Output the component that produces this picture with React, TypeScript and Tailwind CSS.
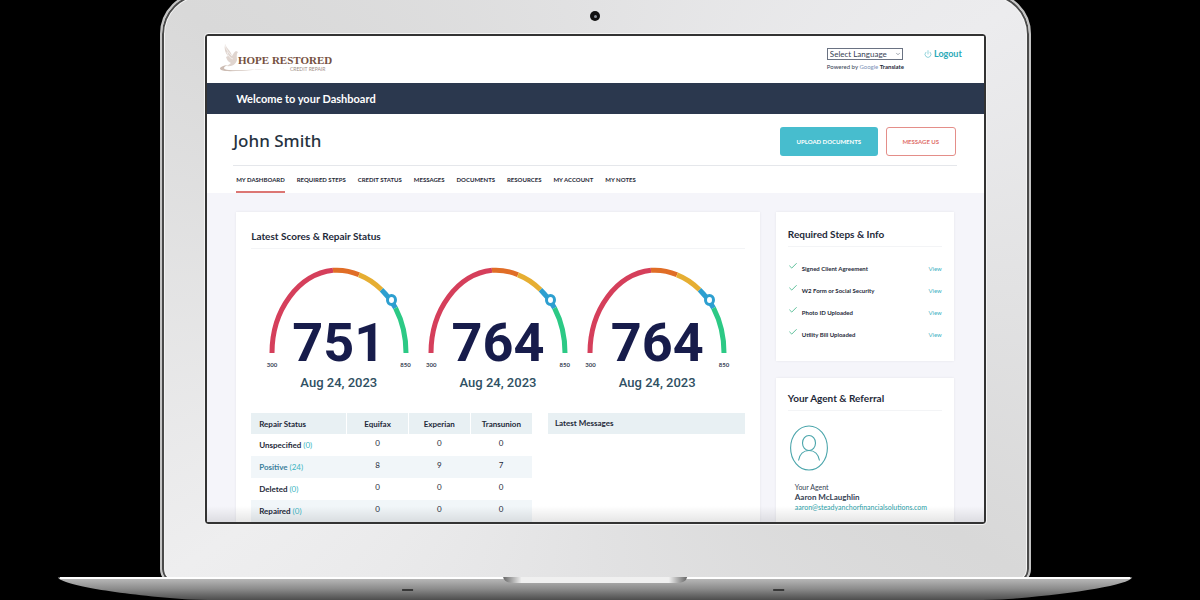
import React from 'react';
import { Check, ChevronDown, Power } from 'lucide-react';

const tabs = [
  'MY DASHBOARD',
  'REQUIRED STEPS',
  'CREDIT STATUS',
  'MESSAGES',
  'DOCUMENTS',
  'RESOURCES',
  'MY ACCOUNT',
  'MY NOTES',
];

const scores = [
  { bureau: 'Equifax', score: 751 },
  { bureau: 'Experian', score: 764 },
  { bureau: 'Transunion', score: 764 },
];

const repairRows = [
  { label: 'Unspecified', total: 0, values: [0, 0, 0] },
  { label: 'Positive', total: 24, values: [8, 9, 7] },
  { label: 'Deleted', total: 0, values: [0, 0, 0] },
  { label: 'Repaired', total: 0, values: [0, 0, 0] },
];

const steps = ['Signed Client Agreement', 'W2 Form or Social Security', 'Photo ID Uploaded', 'Utility Bill Uploaded'];

function Logo() {
  return (
    <a href="#" aria-label="Hope Restored Credit Repair">
      <svg width="124" height="32" viewBox="0 0 124 32">
        <path
          d="M6 1c-1 5 0 9 3 12l-2 1c1 3 2 5 5 6l-4 3c5 1 9-2 10-6 0-3-1-5 1-8l-2-1c-3 2-3 4-4 5C12 8 8 6 6 1z"
          fill="#e0d5cf"
        />
        <path d="M6 2c1 5 4 8 7 11M8 9c1 4 3 6 6 7" stroke="#fff" strokeWidth="0.6" fill="none" />
        <path d="M9 22c-9 1-11 5-3 6 14 1 38-3 62-2-22-1-40 2-58 1-7-1-6-3-1-5z" fill="#cdbdb4" />
        <text x="19" y="21" fontSize="11" fontWeight="700" fill="#75503f" fontFamily="Liberation Serif, serif">
          HOPE RESTORED
        </text>
        <text x="71" y="28" fontSize="5" fill="#a08d84" fontFamily="Lato, sans-serif">
          CREDIT REPAIR
        </text>
      </svg>
    </a>
  );
}

function Gauge({ score }: { score: number }) {
  return (
    <div className="flex flex-col items-center">
      <div className="relative">
        <svg width="148" height="98" viewBox="0 0 148 98" fill="none" strokeWidth="5">
          <path d="M7 92A67 83 0 0 1 68 9.300" stroke="#d53f5b" />
          <path d="M68 9.300A67 83 0 0 1 94 13.800" stroke="#e06d26" />
          <path d="M94 13.800A67 83 0 0 1 116.500 28.800" stroke="#e6ae32" />
          <path d="M116.500 28.800A67 83 0 0 1 130.500 47" stroke="#2d9fd0" />
          <path d="M130.500 47A67 83 0 0 1 141 92" stroke="#2cc985" />
          <ellipse cx="126.500" cy="39" rx="4" ry="4.500" fill="#fff" stroke="#2d9fd0" strokeWidth="3" />
        </svg>
        <p className="absolute inset-x-0 top-[55px] text-center font-[Roboto,sans-serif] text-[54px] leading-[54px] font-bold text-[#171c4b]">
          {score}
        </p>
      </div>
      <div className="flex w-[144px] justify-between text-[6px] leading-3 font-bold text-gray-700">
        <span>300</span>
        <span>850</span>
      </div>
      <p className="mt-1 font-[Roboto,sans-serif] text-[13px] leading-4 font-medium text-[#2f5063]">Aug 24, 2023</p>
    </div>
  );
}

function Header() {
  return (
    <header className="bg-white">
      <div className="flex h-[47px] items-start justify-between pr-[22px] pl-3">
        <div className="pt-[7px]">
          <Logo />
        </div>
        <div className="flex pt-3">
          <div className="mr-5">
            <div className="relative w-[76px]">
              <select
                aria-label="Select Language"
                className="block h-3 w-full appearance-none border border-gray-500 bg-white pl-0.5 text-[8px] leading-[9px] text-gray-700"
              >
                <option>Select Language</option>
              </select>
              <ChevronDown className="pointer-events-none absolute top-[3px] right-0.5 h-1.5 w-1.5 text-gray-600" />
            </div>
            <p className="mt-0.5 text-[6px] leading-[10px] whitespace-nowrap text-gray-700">
              Powered by <span className="text-[#7d93b8]">Google</span> <b className="text-gray-800">Translate</b>
            </p>
          </div>
          <a href="#" className="flex h-3 items-center gap-0.5 text-[9px] font-bold text-[#2ba9b8]">
            <Power className="h-2 w-2" strokeWidth={1.5} />
            Logout
          </a>
        </div>
      </div>
      <div className="flex h-[31px] items-center bg-[#2b384e] px-[29px] pt-0.5 text-[11px] font-bold text-white">
        Welcome to your Dashboard
      </div>
      <div className="mr-[27px] ml-[26px] flex h-[52px] items-center justify-between border-b border-gray-200 pt-[3px]">
        <h1 className="font-['Noto_Sans',sans-serif] text-[17px] font-medium text-[#27333f]">John Smith</h1>
        <div className="flex gap-2 pr-px font-bold">
          <button className="h-[29px] w-[98px] rounded-[3px] bg-[#47bdce] text-[6px] text-white">UPLOAD DOCUMENTS</button>
          <button className="h-[29px] w-[70px] rounded-[3px] border border-[#e48e89] bg-white text-[6px] text-[#e0716b]">
            MESSAGE US
          </button>
        </div>
      </div>
      <nav className="flex h-[27px] gap-3 px-[29px] text-[6px] font-bold whitespace-nowrap text-[#1f2937]">
        {tabs.map((tab, i) => (
          <a
            key={tab}
            href="#"
            className={i === 0 ? 'border-b-2 border-[#dc7673] leading-[28px]' : 'leading-[28px]'}
          >
            {tab}
          </a>
        ))}
      </nav>
    </header>
  );
}

function RepairTable() {
  return (
    <table className="w-full table-fixed border-collapse text-[8px] text-gray-800">
      <thead>
        <tr className="h-[21px] bg-[#e8f0f3]">
          <th className="w-[34%] pl-2 text-left">Repair Status</th>
          {scores.map((s) => (
            <th key={s.bureau} className="border-l border-white text-center">
              {s.bureau}
            </th>
          ))}
        </tr>
      </thead>
      <tbody>
        {repairRows.map((row, i) => (
          <tr key={row.label} className={i % 2 ? 'h-[22px] bg-[#f1f6f9]' : 'h-[22px]'}>
            <th className={row.total ? 'pl-2 text-left text-[#3c7f9c]' : 'pl-2 text-left'}>
              {row.label} <span className="font-normal text-[#3bb5c2]">({row.total})</span>
            </th>
            {row.values.map((value, j) => (
              <td key={j} className="pb-1 text-center">
                {value}
              </td>
            ))}
          </tr>
        ))}
      </tbody>
    </table>
  );
}

function Dashboard() {
  return (
    <main className="flex gap-4 bg-[#f5f5fa] pt-[19px] pr-[30px] pl-[29px]">
      <section className="min-w-0 flex-1 bg-white px-[15px] shadow-[0_0_2px_#e4e4ea]">
        <h2 className="border-b border-gray-100 pt-4 pb-1 text-[10px] leading-4 font-bold text-gray-800">
          Latest Scores &amp; Repair Status
        </h2>
        <div className="grid grid-cols-3 px-2 pt-3">
          {scores.map((s) => (
            <Gauge key={s.bureau} score={s.score} />
          ))}
        </div>
        <div className="mt-[22px] grid grid-cols-[281fr_197fr] items-start gap-4">
          <RepairTable />
          <h3 className="h-[21px] bg-[#e8f0f3] pl-[7px] text-[8px] leading-[21px] font-bold text-gray-800">
            Latest Messages
          </h3>
        </div>
      </section>
      <aside className="flex w-[178px] flex-col gap-[17px]">
        <section className="h-[149px] bg-white px-3 shadow-[0_0_2px_#e4e4ea]">
          <h2 className="border-b border-gray-100 pt-[14px] pb-1 text-[10px] leading-4 font-bold text-gray-800">
            Required Steps &amp; Info
          </h2>
          <ul className="pt-2.5 text-[6px]">
            {steps.map((step) => (
              <li key={step} className="flex h-[22px] items-center">
                <Check className="mb-1 h-2.5 w-2.5 text-[#3fb488]" strokeWidth={2} />
                <span className="ml-1 flex-1 font-bold text-gray-800">{step}</span>
                <a href="#" className="text-[#3fb3c4]">
                  View
                </a>
              </li>
            ))}
          </ul>
        </section>
        <section className="flex-1 bg-white px-3 shadow-[0_0_2px_#e4e4ea]">
          <h2 className="border-b border-gray-100 pt-3 pb-1 text-[10px] leading-4 font-bold text-gray-800">
            Your Agent &amp; Referral
          </h2>
          <svg className="mt-3.5 ml-0.5" width="38" height="46" viewBox="0 0 38 46" fill="none" stroke="#4aa5ab" strokeWidth="1.100">
            <ellipse cx="19" cy="23" rx="18.400" ry="22" />
            <ellipse cx="19" cy="18" rx="6.500" ry="7.500" />
            <path d="M8.500 35.500c1-6 5-10 10.500-10s9.500 4 10.500 10" />
          </svg>
          <div className="mt-[11px] ml-[7px] text-[7px] leading-[10px] text-gray-700">
            <p>Your Agent</p>
            <p className="text-[8px] font-bold">Aaron McLaughlin</p>
            <a href="mailto:aaron@steadyanchorfinancialsolutions.com" className="block text-[#2ba0a8]">
              aaron@steadyanchorfinancialsolutions.com
            </a>
          </div>
        </section>
      </aside>
    </main>
  );
}

function LaptopBase() {
  return (
    <svg className="relative mx-auto -mt-2 block h-6 w-[90.2%]" viewBox="0 0 1074 24" preserveAspectRatio="none">
      <defs>
        <linearGradient id="base" x2="0" y2="1">
          <stop offset="0" stopColor="#bdbdbd" />
          <stop offset="0.500" stopColor="#8c8c8c" />
          <stop offset="1" stopColor="#4d4d4d" />
        </linearGradient>
        <linearGradient id="notch">
          <stop offset="0" stopColor="#666" />
          <stop offset="0.100" stopColor="#f0f0f0" />
          <stop offset="0.900" stopColor="#f0f0f0" />
          <stop offset="1" stopColor="#666" />
        </linearGradient>
      </defs>
      <path d="M0 0.500H1074C1070 8 1015 17 950 22Q940 23 910 23H164Q134 23 124 22C59 17 4 8 0 0.500z" fill="url(#base)" />
      <path d="M2 1H1072" stroke="#fff" strokeWidth="2" />
      <path d="M445 0H629Q628 6 618 6H456Q446 6 445 0z" fill="url(#notch)" />
      <path d="M344 13H355M715 13H726" stroke="#383838" strokeWidth="2" />
    </svg>
  );
}

export default function App() {
  return (
    <div className="min-h-screen overflow-hidden bg-black pr-[9px] font-[Lato,sans-serif]">
      <div className="mx-auto -mt-2 w-[73.1%] rounded-t-[42px] rounded-b-2xl border-2 border-[#c4c4c4] bg-[conic-gradient(#e2e2e3,#ececee_56deg,#d8d8d8_124deg,#e2e2e3_180deg,#eeeeef_236deg,#d9d9d9_304deg,#e2e2e3)] px-[43px] pb-[59px] shadow-[inset_0_0_0_2px_#4a4a4a,inset_0_0_0_3px_#f3f3f3]">
        <div className="flex h-10 items-center justify-center pt-1">
          <span className="flex h-2.5 w-2.5 items-center justify-center rounded-full bg-[#111]">
            <span className="h-[3px] w-[3px] rounded-full bg-[#8a9099]" />
          </span>
        </div>
        <div className="relative overflow-hidden rounded-[3px] border-2 border-[#333] outline outline-[#f4f4f4]">
          <Header />
          <Dashboard />
          <div className="pointer-events-none absolute inset-x-0 bottom-0 h-4 bg-linear-to-t from-black/10 to-transparent" />
        </div>
      </div>
      <LaptopBase />
    </div>
  );
}
